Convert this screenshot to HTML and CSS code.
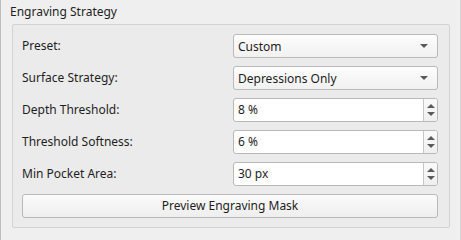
FILE: index.html
```html
<!DOCTYPE html>
<html>
<head>
<meta charset="utf-8">
<link rel="stylesheet" href="styles.css">
</head>
<body>
<div class="panel">
  <div class="group">
    <div class="group-title">Engraving Strategy</div>
    <div class="frame">
      <div class="form">
        <div class="label">Preset:</div>
        <div class="combo"><span>Custom</span><i class="caret"></i></div>
        <div class="label">Surface Strategy:</div>
        <div class="combo"><span>Depressions Only</span><i class="caret"></i></div>
        <div class="label">Depth Threshold:</div>
        <div class="spin"><span class="val">8 %</span><span class="btns"><i class="up"></i><i class="down"></i></span></div>
        <div class="label">Threshold Softness:</div>
        <div class="spin"><span class="val">6 %</span><span class="btns"><i class="up"></i><i class="down"></i></span></div>
        <div class="label">Min Pocket Area:</div>
        <div class="spin"><span class="val">30 px</span><span class="btns"><i class="up"></i><i class="down"></i></span></div>
      </div>
      <div class="button">Preview Engraving Mask</div>
    </div>
  </div>
</div>
</body>
</html>
```
FILE: styles.css
```css
html, body {
  margin: 0;
  padding: 0;
  background: #efefef;
}
body {
  font-family: "Noto Sans", "Open Sans", sans-serif;
  font-size: 12px;
  color: #1e1e1e;
}
.panel {
  width: 461px;
  height: 240px;
  box-sizing: border-box;
  border-left: 1px solid #bdbdbd;
  border-right: 1px solid #d6d6d6;
  padding: 0 10px 0 11px;
}
.group {
  display: flex;
  flex-direction: column;
}
.group-title {
  height: 24px;
  line-height: 23px;
  margin-left: -2px;
}
.frame {
  border: 1px solid #d3d3d3;
  border-radius: 2px;
  background: #ebebeb;
  height: 204px;
  box-sizing: border-box;
  padding: 9px 11px 0 9px;
  display: flex;
  flex-direction: column;
  gap: 8px;
}
.form {
  display: grid;
  grid-template-columns: 1fr 205px;
  row-gap: 8px;
  align-items: center;
}
.label {
  line-height: 24px;
}
.combo {
  height: 24px;
  box-sizing: border-box;
  border: 1px solid #b9b9b9;
  border-radius: 3px;
  background: linear-gradient(#fdfdfd, #f1f1f1);
  display: flex;
  align-items: center;
  justify-content: space-between;
  padding: 0 9px 0 4px;
}
.caret {
  width: 0;
  height: 0;
  border-left: 4px solid transparent;
  border-right: 4px solid transparent;
  border-top: 4px solid #5a5a5a;
}
.spin {
  height: 24px;
  box-sizing: border-box;
  border: 1px solid #b9b9b9;
  border-radius: 3px;
  background: #ffffff;
  display: flex;
  align-items: stretch;
}
.val {
  flex: 1;
  padding-left: 4px;
  line-height: 22px;
}
.btns {
  width: 13px;
  border-left: 1px solid #c6c6c6;
  background: linear-gradient(#fafafa, #efefef);
  display: flex;
  flex-direction: column;
  align-items: center;
  justify-content: center;
  gap: 4px;
  border-radius: 0 2px 2px 0;
}
.up {
  width: 0;
  height: 0;
  border-left: 4px solid transparent;
  border-right: 4px solid transparent;
  border-bottom: 4px solid #5a5a5a;
}
.down {
  width: 0;
  height: 0;
  border-left: 4px solid transparent;
  border-right: 4px solid transparent;
  border-top: 4px solid #5a5a5a;
}
.button {
  height: 24px;
  box-sizing: border-box;
  border: 1px solid #b9b9b9;
  border-radius: 3px;
  background: linear-gradient(#fbfbfb, #eeeeee);
  text-align: center;
  line-height: 22px;
}
```
